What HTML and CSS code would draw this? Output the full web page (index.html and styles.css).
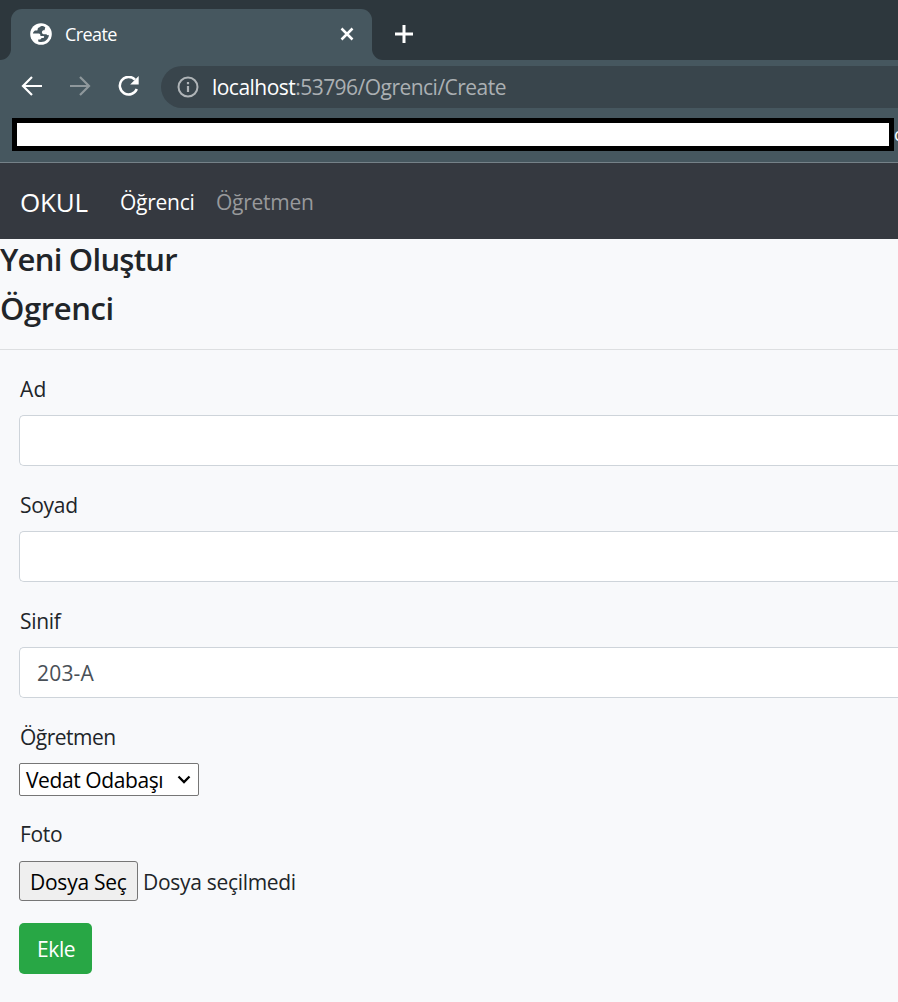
FILE: index.html
```html
<!DOCTYPE html>
<html lang="tr">
<head>
<meta charset="utf-8">
<title>Create</title>
<link rel="stylesheet" href="styles.css">
</head>
<body>
<header class="browser">
  <div class="tabstrip">
    <div class="tab-before"></div>
    <div class="tab">
      <svg class="globe" viewBox="0 0 22 22"><circle cx="11" cy="11" r="10.8" fill="#fff"/><path d="M11.500 2.900C10 3.300 9.900 4.200 8.300 4.800C7.500 5.300 7.900 6.600 7.300 7.400H5C3.700 8.300 3 9.300 2.900 10.400H8.600C10.400 10.500 10.300 11.600 10.500 13H13.600C14.600 13.500 14.200 14.800 13.200 15H11.500C11.200 15.700 11 16.300 9.900 16.400H8.200V18.500C9.300 19 10.300 19.100 11.300 19.100C15.700 19 18.700 15.700 19 11.800C18.200 12.700 17 12.400 16.400 11.300H13.500C11.600 10.900 11.400 8.200 13.200 7.300H14.500L15.300 4.200C14.200 3.300 12.900 2.900 11.500 2.900Z" fill="#46575f"/></svg>
      <span class="tab-title">Create</span>
      <svg class="close" viewBox="0 0 14 14"><path d="M1.500 1.500L12.500 12.500M12.500 1.500L1.500 12.500" stroke="#fff" stroke-width="2.500"/></svg>
    </div>
    <div class="tab-after">
      <svg class="plus" viewBox="0 0 18 18"><path d="M9 0V18M0 9H18" stroke="#fff" stroke-width="3"/></svg>
    </div>
  </div>
  <div class="toolbar">
    <svg class="arrow" viewBox="0 0 22 20"><path d="M21 10H2.500M11 1L2 10L11 19" fill="none" stroke="#fff" stroke-width="2.200"/></svg>
    <svg class="arrow forward" viewBox="0 0 22 20"><path d="M0 10H19M10 1L19 10L10 19" fill="none" stroke="#8f989c" stroke-width="2.200"/></svg>
    <svg class="reload" viewBox="0 0 22 20"><path d="M17 3.600A8.800 8.800 0 1 0 18.800 13" fill="none" stroke="#fff" stroke-width="2.500"/><path d="M20.700 0V8.500H12.200Z" fill="#fff"/></svg>
    <div class="address">
      <svg class="info" viewBox="0 0 22 22"><circle cx="11" cy="11" r="9.500" fill="none" stroke="#b0b5b8" stroke-width="2"/><path d="M11 10V16M11 6V8.200" stroke="#b0b5b8" stroke-width="2.200"/></svg>
      <span class="url"><b class="host">localhost</b>:53796/Ogrenci/Create</span>
    </div>
  </div>
  <div class="bookmarks"><div class="blank"></div><span class="overflow">c</span></div>
</header>
<nav class="navbar">
  <a class="brand">OKUL</a>
  <a class="link active">Öğrenci</a>
  <a class="link muted">Öğretmen</a>
</nav>
<main class="page">
  <h1 class="title">Yeni Oluştur</h1>
  <h2 class="title subtitle">Ögrenci</h2>
  <form class="form">
    <label class="label short">Ad</label>
    <div class="control"></div>
    <label class="label">Soyad</label>
    <div class="control"></div>
    <label class="label">Sinif</label>
    <div class="control"><span class="value">203-A</span></div>
    <label class="label teacher">Öğretmen</label>
    <div class="select"><span class="option">Vedat Odabaşı</span><svg class="chevron" viewBox="0 0 14 9"><path d="M1.500 1.500L7 7L12.500 1.500" fill="none" stroke="#000" stroke-width="2.300"/></svg></div>
    <label class="label">Foto</label>
    <div class="file"><span class="choose">Dosya Seç</span><span class="status">Dosya seçilmedi</span></div>
    <div class="submit">Ekle</div>
  </form>
</main>
</body>
</html>
```
FILE: styles.css
```css
* { box-sizing: border-box; }
body {
  margin: 0;
  height: 1002px;
  overflow: hidden;
  background: #f8f9fb;
  color: #212529;
  font-family: "Open Sans", "Noto Sans", sans-serif;
  font-size: 21px;
  line-height: 32px;
  white-space: nowrap;
}
svg { display: block; flex: none; }
.browser { background: #46575f; height: 163px; border-bottom: 1px solid #758188; }
.tabstrip { display: flex; height: 60px; background: linear-gradient(#2d373d 30px, #46575f 30px); }
.tab-before { width: 11px; background: #2d373d; border-bottom-right-radius: 11px; }
.tab {
  display: flex;
  align-items: center;
  width: 361px;
  margin-top: 9px;
  padding: 0 18px 2px 19px;
  background: #46575f;
  border-radius: 11px 11px 0 0;
}
.globe { width: 22px; height: 22px; }
.tab-title { margin-left: 13px; color: #fff; font-size: 18px; letter-spacing: -0.6px; }
.close { width: 14px; height: 14px; margin-left: auto; }
.tab-after { flex: 1; background: #2d373d; border-bottom-left-radius: 11px; padding: 25px 0 0 23px; }
.plus { width: 18px; height: 18px; }
.toolbar { display: flex; align-items: center; height: 54px; padding-left: 21px; }
.arrow { width: 22px; height: 20px; margin-bottom: 2px; }
.forward { margin-left: 27px; }
.reload { width: 22px; height: 20px; margin-left: 26px; margin-bottom: 2px; }
.address {
  display: flex;
  align-items: center;
  flex: 1;
  height: 42px;
  margin-left: 21px;
  padding-left: 16px;
  background: #39454c;
  border-radius: 21px 0 0 21px;
}
.info { width: 22px; height: 22px; }
.url { margin-left: 13px; color: #abb0b3; letter-spacing: -0.53px; }
.host { color: #fff; font-weight: 400; }
.bookmarks { display: flex; height: 48px; padding: 4px 0 0 12px; overflow: hidden; }
.blank { flex: none; width: 882px; height: 33px; background: #fff; border: 5px solid #000; }
.overflow { color: #fff; font-size: 18px; }
.navbar { display: flex; align-items: center; height: 76px; padding: 2px 0 0 20px; background: #353940; }
.brand { width: 100px; color: #fff; font-size: 26px; letter-spacing: -0.2px; }
.link { width: 96px; letter-spacing: -0.25px; }
.active { color: #fff; }
.muted { color: #98999c; }
.title { margin: 0; height: 49px; font-size: 31px; line-height: 40px; font-weight: 600; letter-spacing: -0.75px; }
.subtitle { height: 62px; border-bottom: 1px solid #dddfe1; letter-spacing: -0.4px; }
.form { margin: 0; padding: 22px 0 0 19px; }
.label { display: block; height: 43px; padding-left: 1px; line-height: 34px; letter-spacing: -0.3px; }
.short { letter-spacing: 0.3px; }
.teacher { letter-spacing: -0.5px; }
.control {
  height: 51px;
  margin-bottom: 22px;
  padding: 9px 17px;
  background: #fff;
  border: 1px solid #ced4da;
  border-right: 0;
  border-radius: 5px 0 0 5px;
}
.value { color: #495057; letter-spacing: 0.2px; }
.select {
  display: flex;
  align-items: center;
  justify-content: space-between;
  width: 180px;
  height: 33px;
  margin-bottom: 21px;
  padding: 0 7px 0 6px;
  border: 1px solid #767676;
  border-radius: 2px;
  background: #fff;
  color: #000;
}
.option { letter-spacing: -0.4px; }
.chevron { width: 14px; height: 9px; }
.file { display: flex; align-items: center; height: 40px; margin: 1px 0 22px; }
.choose {
  width: 119px;
  height: 40px;
  margin-right: 5px;
  padding: 4px 10px;
  color: #000;
  background: #efefef;
  border: 1px solid #767676;
  border-radius: 3px;
  letter-spacing: -0.25px;
}
.status { padding-top: 2px; letter-spacing: -0.3px; }
.submit { width: 73px; height: 51px; padding: 10px 18px; border-radius: 5px; background: #28a745; color: #fff; letter-spacing: -0.4px; }
```
